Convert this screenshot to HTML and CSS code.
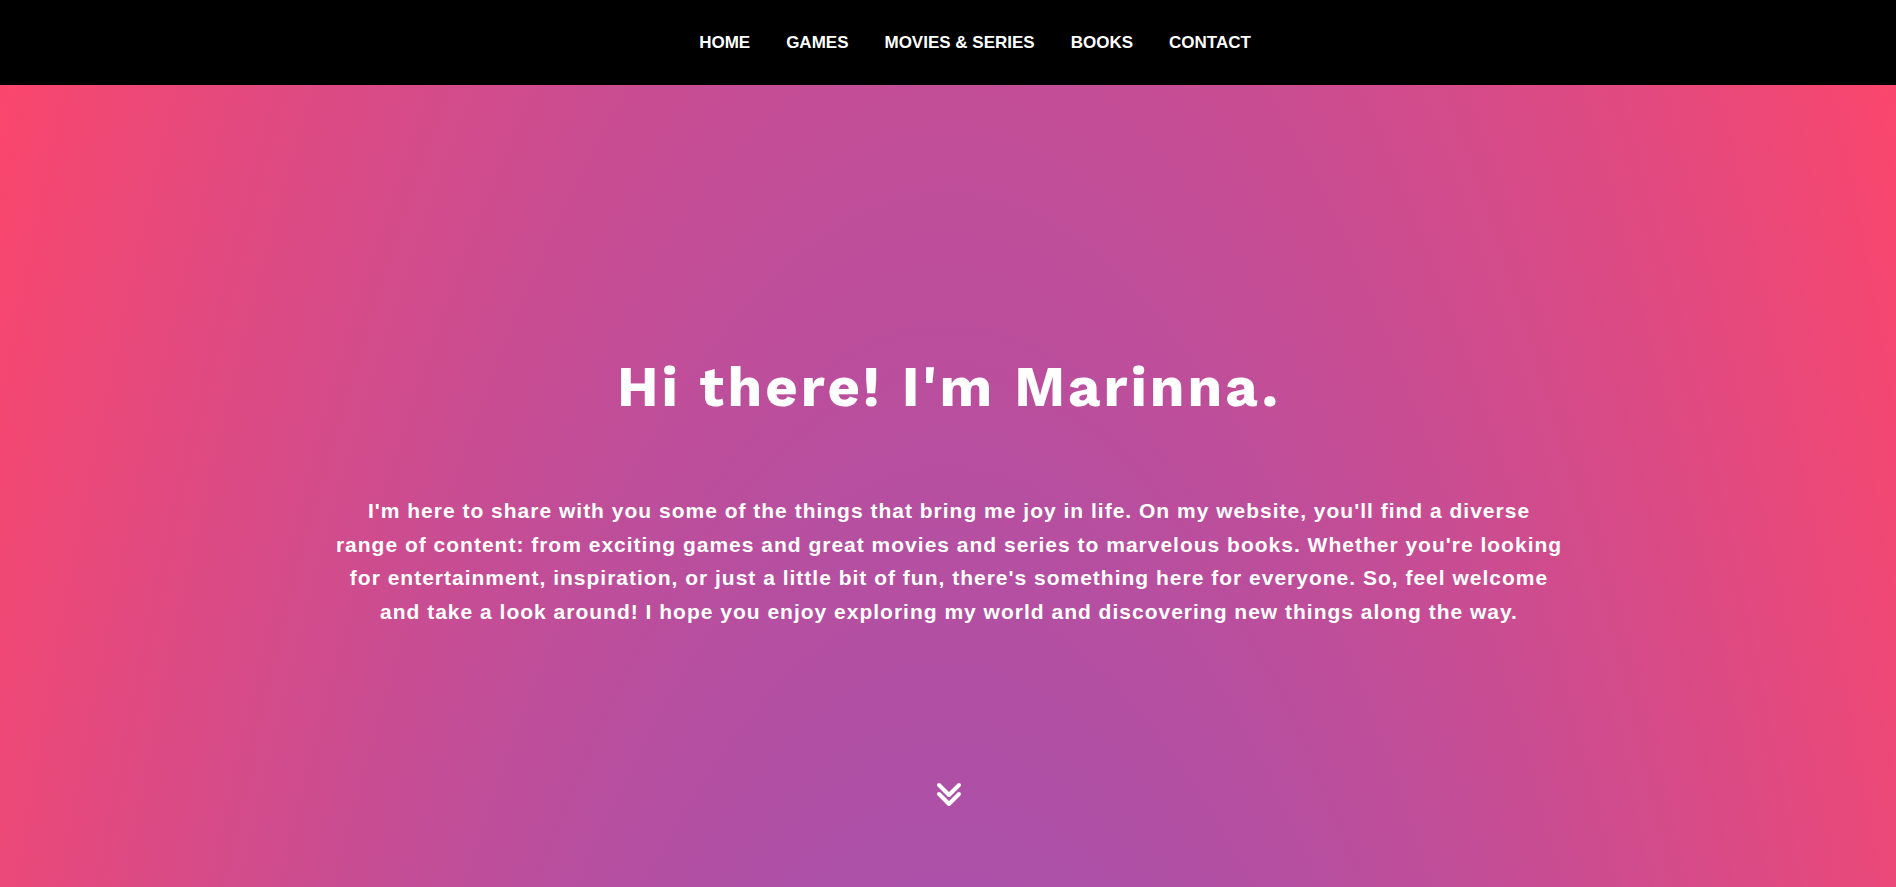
FILE: index.html
```html
<!DOCTYPE html>
<html lang="en">
<head>
<meta charset="utf-8">
<meta name="viewport" content="width=device-width, initial-scale=1">
<title>Marinna</title>
<link rel="stylesheet" href="styles.css">
</head>
<body>
<header class="site-header">
  <nav aria-label="Main">
    <ul class="menu">
      <li><a href="#home">HOME</a></li>
      <li><a href="#games">GAMES</a></li>
      <li><a href="#movies">MOVIES &amp; SERIES</a></li>
      <li><a href="#books">BOOKS</a></li>
      <li><a href="#contact">CONTACT</a></li>
    </ul>
  </nav>
</header>
<main class="hero" id="home">
  <h1 class="hero-title">Hi there! I'm Marinna.</h1>
  <p class="hero-text">I'm here to share with you some of the things that bring me joy in life. On my website, you'll find a diverse range of content: from exciting games and great movies and series to marvelous books. Whether you're looking for entertainment, inspiration, or just a little bit of fun, there's something here for everyone. So, feel welcome and take a look around! I hope you enjoy exploring my world and discovering new things along the way.</p>
  <a class="scroll-down" href="#games" aria-label="Scroll down">
    <svg width="26" height="26" viewBox="0 0 26 26" fill="none" stroke="#fff" stroke-width="4" stroke-linecap="round" stroke-linejoin="round" aria-hidden="true"><path d="M3 3l10 10L23 3M3 12l10 10 10-10"/></svg>
  </a>
</main>
</body>
</html>
```
FILE: styles.css
```css
* {
  box-sizing: border-box;
}

body {
  margin: 0;
  min-height: 100vh;
  display: flex;
  flex-direction: column;
  font-family: Arial, "Liberation Sans", sans-serif;
  font-weight: bold;
  color: #fff;
}

.site-header {
  background: #000;
  padding: 33px 0 32px;
}

.menu {
  display: flex;
  flex-wrap: wrap;
  justify-content: center;
  gap: 36px;
  margin: 0;
  padding: 0 0 0 54px;
  list-style: none;
  font-size: 17px;
  line-height: 20px;
}

.menu a {
  color: #fff;
  text-decoration: none;
}

.hero {
  flex: 1;
  display: flex;
  flex-direction: column;
  align-items: center;
  padding: 264px 24px 40px 26px;
  text-align: center;
  background: radial-gradient(71vw 6646px at 50% 4615px, #3f5efb, #fc466b);
}

.hero-title {
  margin: 0;
  font-family: "Work Sans", Inter, sans-serif;
  font-size: 56px;
  font-weight: 700;
  line-height: 76px;
  letter-spacing: 3px;
}

.hero-text {
  max-width: 1264px;
  margin: 69px 0 0;
  font-size: 21px;
  line-height: 1.6;
  letter-spacing: 1px;
  text-wrap: balance;
}

.scroll-down {
  display: flex;
  margin-top: 154px;
}
```
